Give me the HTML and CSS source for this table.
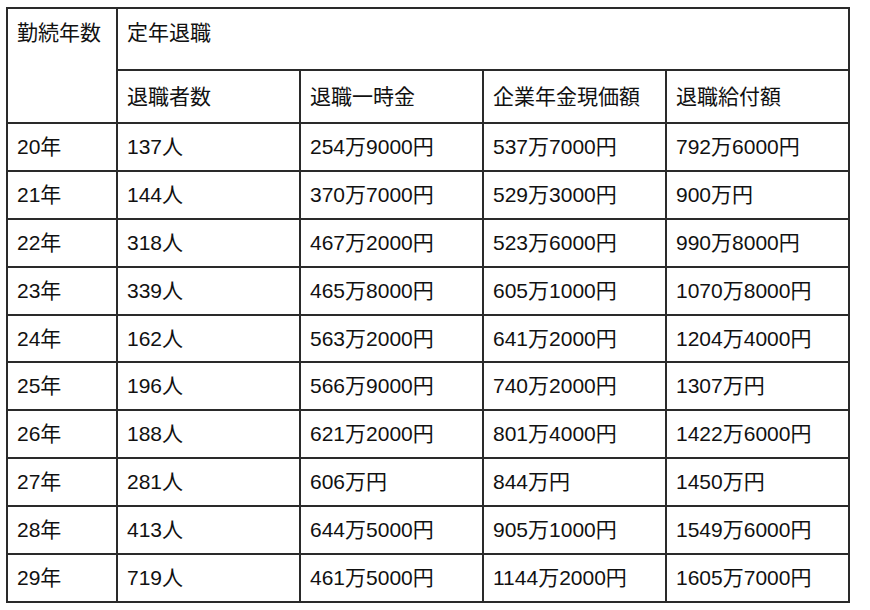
FILE: index.html
```html
<!DOCTYPE html>
<html lang="ja">
<head>
<meta charset="utf-8">
<link rel="stylesheet" href="styles.css">
</head>
<body>
<div class="wrap">
<table class="tbl">
<colgroup>
<col class="c1"><col class="c2"><col class="c2"><col class="c2"><col class="c2">
</colgroup>
<thead>
<tr class="h1">
<th rowspan="2" class="top">勤続年数</th>
<th colspan="4" class="top">定年退職</th>
</tr>
<tr class="h2">
<th>退職者数</th>
<th>退職一時金</th>
<th>企業年金現価額</th>
<th>退職給付額</th>
</tr>
</thead>
<tbody>
<tr><td>20年</td><td>137人</td><td>254万9000円</td><td>537万7000円</td><td>792万6000円</td></tr>
<tr><td>21年</td><td>144人</td><td>370万7000円</td><td>529万3000円</td><td>900万円</td></tr>
<tr><td>22年</td><td>318人</td><td>467万2000円</td><td>523万6000円</td><td>990万8000円</td></tr>
<tr><td>23年</td><td>339人</td><td>465万8000円</td><td>605万1000円</td><td>1070万8000円</td></tr>
<tr><td>24年</td><td>162人</td><td>563万2000円</td><td>641万2000円</td><td>1204万4000円</td></tr>
<tr><td>25年</td><td>196人</td><td>566万9000円</td><td>740万2000円</td><td>1307万円</td></tr>
<tr><td>26年</td><td>188人</td><td>621万2000円</td><td>801万4000円</td><td>1422万6000円</td></tr>
<tr><td>27年</td><td>281人</td><td>606万円</td><td>844万円</td><td>1450万円</td></tr>
<tr><td>28年</td><td>413人</td><td>644万5000円</td><td>905万1000円</td><td>1549万6000円</td></tr>
<tr><td>29年</td><td>719人</td><td>461万5000円</td><td>1144万2000円</td><td>1605万7000円</td></tr>
</tbody>
</table>
</div>
</body>
</html>
```
FILE: styles.css
```css
html, body {
  margin: 0;
  padding: 0;
  background: #fff;
}
.wrap {
  padding: 7px 0 0 6px;
}
.tbl {
  border-collapse: collapse;
  table-layout: fixed;
  width: 842px;
  font-family: "Liberation Sans", "Noto Sans CJK JP", sans-serif;
  font-size: 21px;
  color: #111;
  border: 2px solid #2a2a2a;
}
.c1 { width: 110px; }
.c2 { width: 183px; }
.tbl th,
.tbl td {
  border: 2px solid #2a2a2a;
  padding: 0 9px;
  text-align: left;
  font-weight: normal;
  line-height: 28px;
  vertical-align: middle;
  white-space: nowrap;
}
.tbl th.top {
  vertical-align: top;
  padding-top: 10px;
}
.h1 { height: 62px; }
.h2 { height: 53px; }
.tbl tbody tr { height: 47.9px; }
```
